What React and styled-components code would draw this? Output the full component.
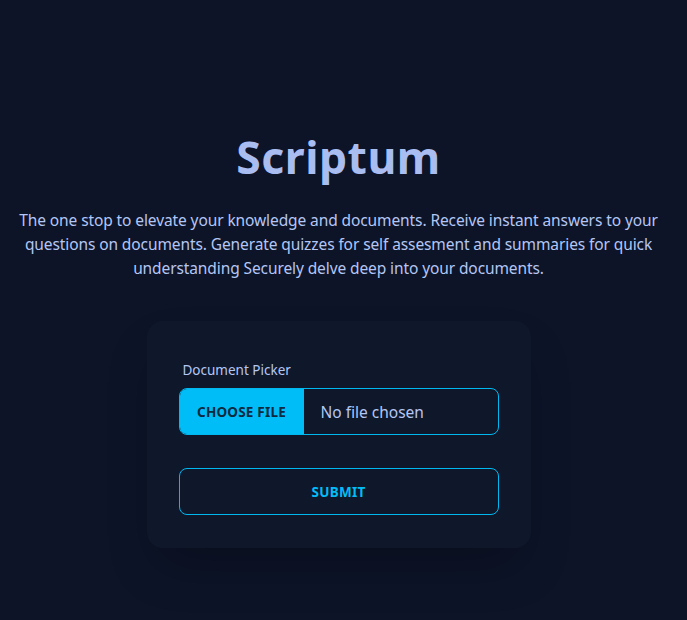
import React from "react";
import styled, { createGlobalStyle } from "styled-components";

const Global = createGlobalStyle`
  html, body { margin: 0; padding: 0; background: #0d1428; }
  body { font-family: "Noto Sans", "Open Sans", sans-serif; }
  * { box-sizing: border-box; }
`;

const Page = styled.main`
  min-height: 620px;
  display: flex;
  flex-direction: column;
  align-items: center;
  padding: 128px 18px 40px 8px;
  background: #0d1428;
`;

const Title = styled.h1`
  margin: 0;
  font-size: 44.5px;
  line-height: 58px;
  font-weight: 700;
  color: #a9bdf1;
  letter-spacing: 0.5px;
`;

const Lead = styled.p`
  margin: 22px 0 0;
  max-width: 661px;
  text-align: center;
  font-size: 15.5px;
  line-height: 24px;
  color: #b4c6f4;
  letter-spacing: -0.1px;
`;

const Card = styled.section`
  margin-top: 41px;
  width: 384px;
  padding: 39px 32px 33px;
  background: #0f182b;
  border-radius: 16px;
  box-shadow: 0 25px 50px -12px rgba(0, 0, 0, 0.3);
  display: flex;
  flex-direction: column;
`;

const Label = styled.label`
  font-size: 13.5px;
  line-height: 20px;
  color: #b4c6f4;
  padding-left: 4px;
`;

const FileBox = styled.div`
  margin-top: 8px;
  height: 47px;
  display: flex;
  align-items: stretch;
  border: 1px solid #00b8f0;
  border-radius: 8px;
  overflow: hidden;
`;

const ChooseButton = styled.span`
  width: 124px;
  display: flex;
  align-items: center;
  justify-content: center;
  background: #00bcf7;
  color: #0c2a40;
  font-size: 13.5px;
  font-weight: 700;
  letter-spacing: 0.2px;
`;

const FileName = styled.span`
  display: flex;
  align-items: center;
  padding-left: 17px;
  font-size: 15.5px;
  color: #b4c6f4;
`;

const Submit = styled.button`
  margin-top: 33px;
  height: 47px;
  border: 1px solid #00b8f0;
  border-radius: 8px;
  background: transparent;
  color: #00bcf7;
  font-family: inherit;
  font-size: 13.5px;
  font-weight: 700;
  letter-spacing: 0.3px;
  cursor: pointer;
`;

export default function App() {
  return (
    <>
      <Global />
      <Page>
        <Title>Scriptum</Title>
        <Lead>
          The one stop to elevate your knowledge and documents. Receive instant answers to your
          questions on documents. Generate quizzes for self assesment and summaries for quick
          understanding Securely delve deep into your documents.
        </Lead>
        <Card>
          <Label>Document Picker</Label>
          <FileBox>
            <ChooseButton>CHOOSE FILE</ChooseButton>
            <FileName>No file chosen</FileName>
          </FileBox>
          <Submit>SUBMIT</Submit>
        </Card>
      </Page>
    </>
  );
}
